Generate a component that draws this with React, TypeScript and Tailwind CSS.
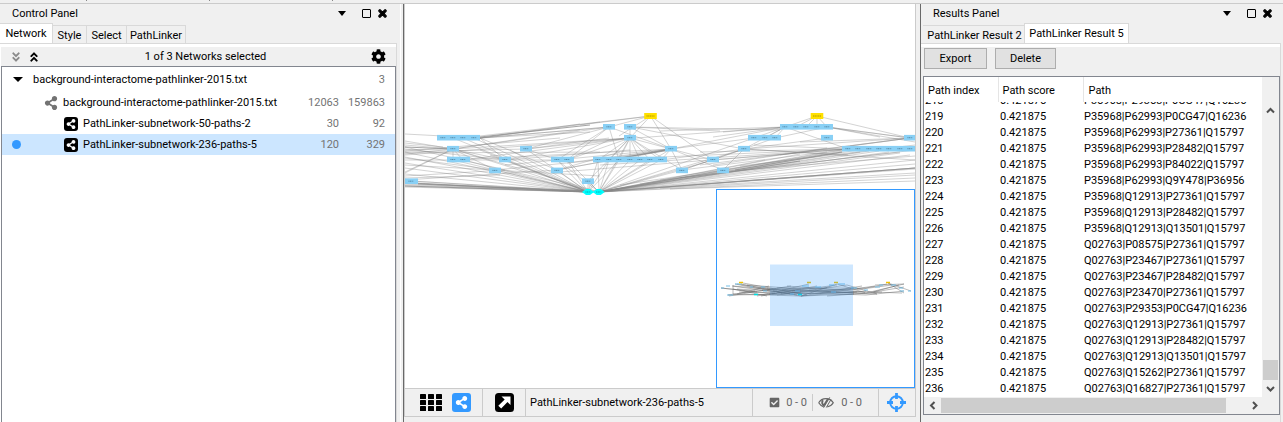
import type { ReactNode } from "react";
import { FaAngleDoubleDown, FaAngleDoubleUp, FaCheckSquare, FaCog, FaShareAlt, FaTimes } from "react-icons/fa";

type Point = [number, number];
type Edge = [number, number, number, number];

// Node boxes: centre y, left, right, label centres
const boxes: { y: number; x1: number; x2: number; labels: number[] }[] = [
  { y: 137.7, x1: 437, x2: 480, labels: [443, 453, 463, 474] },
  { y: 148.7, x1: 447, x2: 459, labels: [453] },
  { y: 159.5, x1: 447, x2: 470, labels: [453, 463] },
  { y: 148.7, x1: 520, x2: 532, labels: [526] },
  { y: 159.5, x1: 499, x2: 511, labels: [505] },
  { y: 170.4, x1: 489, x2: 501, labels: [495] },
  { y: 159.5, x1: 551, x2: 574, labels: [557, 567] },
  { y: 170.4, x1: 551, x2: 563, labels: [557] },
  { y: 181.2, x1: 405, x2: 418, labels: [411] },
  { y: 126.8, x1: 603, x2: 615, labels: [609] },
  { y: 126.8, x1: 624, x2: 636, labels: [630] },
  { y: 137.7, x1: 624, x2: 636, labels: [630] },
  { y: 148.7, x1: 665, x2: 677, labels: [671] },
  { y: 159.5, x1: 593, x2: 667, labels: [598, 609, 619, 630, 640, 650, 661] },
  { y: 159.5, x1: 707, x2: 719, labels: [713] },
  { y: 170.4, x1: 676, x2: 688, labels: [682] },
  { y: 170.4, x1: 717, x2: 729, labels: [723] },
  { y: 181.2, x1: 582, x2: 594, labels: [588] },
  { y: 148.7, x1: 738, x2: 750, labels: [744] },
  { y: 137.7, x1: 748, x2: 781, labels: [754, 765, 775] },
  { y: 126.8, x1: 780, x2: 833, labels: [785, 796, 806, 817, 827] },
  { y: 137.7, x1: 821, x2: 833, labels: [827] },
  { y: 148.7, x1: 842, x2: 916, labels: [848, 858, 869, 879, 889, 900, 910] },
  { y: 137.7, x1: 904, x2: 916, labels: [910] },
];

const fan = ([x, y]: Point, targets: Point[]): Edge[] => targets.map(([a, b]) => [x, y, a, b]);

const edges: Edge[] = [
  ...fan([588, 192], [
    [405, 152], [405, 157], [405, 163], [405, 168], [405, 174], [405, 184], [405, 186], [405, 187],
    [411, 181], [418, 183], [453, 149], [463, 160], [453, 160], [453, 138], [463, 138], [474, 138],
    [495, 170], [505, 160], [526, 149], [557, 170], [557, 160], [567, 160], [588, 181], [480, 150],
    [490, 155], [510, 150], [609, 160], [619, 160], [598, 160],
  ]),
  ...fan([599, 192], [
    [588, 181], [557, 160], [567, 160], [598, 160], [609, 160], [619, 160], [630, 160], [640, 160],
    [650, 160], [661, 160], [630, 138], [671, 149], [682, 170], [723, 170], [713, 160], [744, 149],
    [765, 160], [800, 154], [842, 150], [858, 150], [869, 151], [879, 151], [889, 152], [900, 153],
    [910, 155], [915, 160], [915, 164], [915, 168], [915, 169], [915, 175], [915, 178], [827, 152],
    [848, 150], [754, 138], [453, 149], [463, 160], [411, 181], [405, 185],
  ]),
  ...fan([650.5, 116], [[609, 127], [580, 125], [480, 136], [630, 138], [671, 149], [713, 160], [619, 136]]),
  ...fan([817, 116], [[785, 127], [796, 127], [806, 127], [817, 127], [827, 127], [910, 138]]),
  ...fan([630, 138], [
    [453, 149], [463, 160], [567, 160], [588, 181], [598, 160], [609, 160], [619, 160], [630, 160],
    [640, 160], [650, 160], [661, 160], [671, 149], [682, 170], [526, 149], [505, 160], [630, 127],
  ]),
  ...fan([671, 149], [
    [609, 127], [630, 127], [598, 160], [609, 160], [619, 160], [557, 170], [682, 170], [713, 160],
    [723, 170], [453, 160], [505, 165], [754, 138], [785, 127], [567, 163],
  ]),
  ...fan([453, 149], [[405, 145], [405, 150], [405, 154], [405, 172], [463, 160], [505, 160], [495, 170], [609, 127], [580, 130], [453, 160]]),
  ...fan([785, 127], [[754, 138], [744, 149], [765, 138], [723, 132], [660, 131], [609, 140], [713, 137], [775, 138]]),
  ...fan([827, 127], [[910, 138], [915, 142], [880, 137], [775, 138], [785, 127]]),
  ...fan([480, 138], [[580, 124], [609, 127], [600, 122], [590, 132], [505, 160], [557, 170]]),
  ...fan([744, 149], [[682, 170], [723, 170], [661, 160], [775, 138], [827, 138], [848, 155], [915, 160]]),
  ...fan([848, 149], [[785, 127], [754, 145], [700, 152], [640, 158], [600, 165], [560, 172]]),
  ...fan([910, 138], [[850, 146], [800, 142], [744, 149], [780, 155], [700, 165], [827, 127]]),
  ...fan([609, 127], [[557, 160], [619, 160], [526, 149], [567, 160], [480, 138]]),
  [405, 134, 443, 136], [405, 141, 453, 149], [405, 143, 443, 147], [405, 147, 463, 160],
  [405, 149, 505, 160], [405, 152, 526, 149], [405, 153, 600, 152], [405, 151, 560, 138],
  [405, 155, 630, 138], [405, 160, 557, 160], [405, 158, 495, 170], [405, 165, 600, 176],
  [405, 173, 453, 149], [405, 176, 505, 170], [405, 180, 557, 170], [405, 178, 500, 175],
  [505, 160, 630, 150], [526, 149, 557, 160], [526, 149, 609, 138], [495, 170, 598, 160],
  [557, 170, 671, 149], [557, 170, 620, 152], [567, 160, 609, 140], [682, 170, 744, 149],
  [630, 127, 720, 131], [630, 127, 780, 130], [636, 128, 744, 149], [671, 149, 661, 160],
  [682, 170, 842, 150], [620, 185, 842, 152], [640, 184, 860, 152], [660, 180, 900, 152],
  [680, 178, 915, 150], [720, 172, 915, 156], [740, 166, 915, 145], [660, 188, 915, 173],
  [670, 189, 915, 181], [640, 189, 915, 168], [713, 160, 848, 149], [713, 165, 827, 148],
];

const thickEdges: Edge[] = [
  [411, 183, 588, 192], [405, 186, 588, 192], [418, 184, 588, 191],
  [480, 137, 590, 125], [599, 192, 915, 168], [599, 192, 800, 161],
  [598, 161, 671, 150], [453, 149, 405, 147], [735, 170, 842, 152],
];

const minimapEdges: Edge[] = [
  [4, 98, 40, 102], [4, 98, 60, 104], [18, 94, 65, 103], [26, 93, 90, 105], [16, 95, 16, 104],
  [15, 96, 80, 105], [11, 105, 85, 104], [11, 105, 38, 101], [16, 104, 84, 106], [24, 94, 84, 106],
  [16, 96, 84, 102], [12, 106, 74, 96], [20, 94, 60, 100], [30, 95, 84, 99], [20, 99, 100, 104],
  [40, 106, 92, 94], [84, 106, 120, 94], [84, 106, 137, 104], [84, 106, 149, 101], [84, 106, 145, 96],
  [52, 104, 120, 95], [50, 98, 137, 103], [60, 102, 149, 105], [45, 100, 110, 98], [55, 104, 149, 98],
  [44, 106, 100, 96], [70, 96, 137, 101], [60, 105, 130, 95], [65, 100, 148, 103], [75, 101, 160, 104],
  [120, 94, 149, 103], [130, 95, 160, 104], [149, 103, 187, 94], [137, 100, 175, 95], [158, 95, 187, 94],
  [156, 102, 182, 95], [149, 98, 170, 94], [171, 93, 187, 103], [171, 93, 194, 101], [157, 102, 187, 97],
  [149, 105, 187, 101], [110, 106, 165, 102], [100, 104, 158, 96], [92, 100, 185, 103], [20, 104, 52, 96],
  [22, 102, 58, 103], [16, 99, 50, 106], [60, 98, 137, 98], [56, 101, 137, 99], [64, 104, 140, 102],
];

function NetworkCanvas() {
  return (
    <svg className="block h-full w-full" viewBox="405 4 510 384" preserveAspectRatio="xMaxYMin slice" role="img" aria-label="Network view">
      <g stroke="#858585" strokeWidth="0.6" strokeOpacity="0.6">
        {edges.map(([a, b, c, d], i) => <line key={i} x1={a} y1={b} x2={c} y2={d} />)}
      </g>
      <g stroke="#8a8a8a" strokeWidth="1.2" strokeOpacity="0.75">
        {thickEdges.map(([a, b, c, d], i) => <line key={i} x1={a} y1={b} x2={c} y2={d} />)}
      </g>
      {boxes.map((box, i) => (
        <g key={i}>
          <rect x={box.x1} y={box.y - 2.8} width={box.x2 - box.x1} height="5.6" fill="#89d0f5" />
          {box.labels.map((x) => (
            <path key={x} d={`M${x - 2.5} ${box.y}h5`} stroke="#2c5068" strokeWidth="1" strokeDasharray="1 .6" strokeOpacity="0.6" />
          ))}
        </g>
      ))}
      {[650.5, 817].map((x) => (
        <g key={x}>
          <rect x={x - 6.3} y="113" width="12.6" height="6" fill="#ffe000" />
          <path d={`M${x - 4} 116h8`} stroke="#7a6500" strokeWidth="1" strokeDasharray="1.2 .5" strokeOpacity="0.6" />
        </g>
      ))}
      {[588, 598.7].map((x) => (
        <g key={x}>
          <path d={`M${x - 6} 192l4-3h4l4 3-4 3h-4z`} fill="#00ffff" />
          <path d={`M${x - 2.5} 192h5`} stroke="#067" strokeWidth="1" strokeDasharray="1 .6" strokeOpacity="0.6" />
        </g>
      ))}
    </svg>
  );
}

function Minimap() {
  return (
    <svg className="block h-full w-full" viewBox="0 0 197 197" role="img" aria-label="Network overview">
      <g stroke="#5c5c5c" strokeWidth="0.7" strokeOpacity="0.6">
        {minimapEdges.map(([a, b, c, d], i) => <line key={i} x1={a} y1={b} x2={c} y2={d} />)}
      </g>
      <path
        d="M4 98h3M9 96h4M18 94h7M10 105h6M33 97h3M46 101h4M44 97h4M78 101h5M73 104h4M85 96h7M98 97h6M112 95h5M121 94h7M114 102h5M134 98h6M147 100h4M158 97h5M162 95h4M174 95h5M182 98h4M183 101h4M191 101h3"
        stroke="#75bfe8" strokeWidth="1.2" fill="none"
      />
      <path d="M22 92.500h4M90 92.500h4M117 92.500h4M169 92.500h4" stroke="#f2c200" strokeWidth="1.600" />
      <path d="M37 104.500h4M81 104.500h4" stroke="#00dede" strokeWidth="1.500" />
      <rect x="53" y="74.500" width="83" height="61.500" fill="#3399ff" fillOpacity="0.24" />
    </svg>
  );
}

const ShareSquare = () => (
  <span className="flex size-3.5 shrink-0 items-center justify-center rounded-[3px] bg-black">
    <FaShareAlt className="size-2.5 text-white" />
  </span>
);

function PanelTitle({ children }: { children: ReactNode }) {
  return (
    <div className="flex h-[19px] shrink-0 items-center pl-3">
      <h2 className="grow">{children}</h2>
      <button aria-label="Panel menu" className="mr-4">
        <svg className="block h-[5px] w-2" viewBox="0 0 8 5"><path d="M0 0h8L4 5z" /></svg>
      </button>
      <button aria-label="Float panel" className="mr-1.5 block size-[9px] rounded-[1px] border border-black" />
      <button aria-label="Close panel"><FaTimes className="size-[11px] stroke-black stroke-[50]" /></button>
    </div>
  );
}

const tabIdle = "flex h-[18px] items-center border border-b-0 border-l-0 border-[#d9d9d9] pt-0.5";
const tabActive = "flex h-5 items-center border border-b-0 border-[#d9d9d9] bg-white";

const networks = [
  { name: "background-interactome-pathlinker-2015.txt", nodes: "12063", edges: "159863", depth: 0 },
  { name: "PathLinker-subnetwork-50-paths-2", nodes: "30", edges: "92", depth: 1 },
  { name: "PathLinker-subnetwork-236-paths-5", nodes: "120", edges: "329", depth: 1 },
];

function ControlPanel() {
  return (
    <section className="mr-0.5 flex w-[401px] shrink-0 flex-col border-r border-white pr-px">
      <div className="pr-[11px]"><PanelTitle>Control Panel</PanelTitle></div>
      <div role="tablist" className="flex h-5 shrink-0 items-end">
        <button role="tab" aria-selected="true" className={`${tabActive} w-[53px] justify-center border-l-0`}>Network</button>
        <button role="tab" aria-selected="false" className={`${tabIdle} w-[34px] justify-center`}>Style</button>
        <button role="tab" aria-selected="false" className={`${tabIdle} w-10 justify-center`}>Select</button>
        <button role="tab" aria-selected="false" className={`${tabIdle} w-[59px] justify-center`}>PathLinker</button>
      </div>
      <div className="mr-0.5 flex min-h-0 grow flex-col border-t border-r border-[#d9d9d9] bg-white pt-[3px] pl-px">
        <div className="relative flex h-[19px] shrink-0 items-center bg-[#f0f0f0] pr-2.5 pl-[9px]">
          <button aria-label="Expand all"><FaAngleDoubleDown className="size-3 text-[#8a8a8a]" /></button>
          <button aria-label="Collapse all" className="ml-1.5"><FaAngleDoubleUp className="size-3" /></button>
          <p className="grow text-center">1 of 3 Networks selected</p>
          <button aria-label="Options"><FaCog className="size-[15px]" /></button>
        </div>
        <div className="min-h-0 grow border border-b-0 border-[#82868f]">
          <div className="flex h-[25px] items-center pr-2.5 pl-2.5">
            <button aria-label="Collapse group"><svg className="block h-[5px] w-3" viewBox="0 0 12 5"><path d="M1 0h10L6 5z" /></svg></button>
            <span className="grow pl-[9px] whitespace-nowrap">background-interactome-pathlinker-2015.txt</span>
            <span className="text-[#737373]">3</span>
          </div>
          {networks.map((n, i) => (
            <div key={n.name} className={i === 2 ? "flex h-[21px] items-center bg-[#cce6ff] pr-2.5" : "flex h-[21px] items-center pr-2.5"}>
              <span className="flex w-7 shrink-0 pl-2.5">{i === 2 && <span className="size-[9px] rounded-full bg-[#3399ff]" />}</span>
              <span className={n.depth === 0 ? "flex w-[33px] shrink-0 pl-3.5" : "flex w-[53px] shrink-0 pl-[34px]"}>
                {n.depth === 0 ? <FaShareAlt className="size-3.5 text-[#737373]" /> : <ShareSquare />}
              </span>
              <span className="grow whitespace-nowrap">{n.name}</span>
              <span className="w-10 shrink-0 text-right text-[#737373]">{n.nodes}</span>
              <span className="w-[46px] shrink-0 text-right text-[#737373]">{n.edges}</span>
            </div>
          ))}
        </div>
      </div>
    </section>
  );
}

function StatusBar() {
  return (
    <div className="flex h-[29px] shrink-0 items-center border-y border-[#cbcbcb] text-[#666]">
      <div className="flex h-full w-[78px] items-center gap-2.5 border-r border-[#cbcbcb] pl-[15px]">
        <button aria-label="Show grid">
          <svg className="block h-[17px] w-[22px]" viewBox="0 0 22 17">
            {[0, 6, 12].map((y) => [0, 8, 16].map((x) => <rect key={`${x}-${y}`} x={x} y={y} width="6" height="5" rx="0.6" />))}
          </svg>
        </button>
        <button aria-label="Show view" className="flex size-[19px] items-center justify-center rounded-[3px] bg-[#3399ff]">
          <FaShareAlt className="size-[13px] text-white" />
        </button>
      </div>
      <div className="flex h-full w-[43px] items-center justify-center border-r border-[#cbcbcb]">
        <button aria-label="Detach view" className="size-[19px]">
          <svg className="block size-full" viewBox="0 0 19 19">
            <rect width="19" height="19" rx="3.500" fill="#000" />
            <path d="M6.500 3.500h9V12l-3-3-6.300 6.600L3.300 12.700 9.700 6.500z" fill="#fff" />
          </svg>
        </button>
      </div>
      <p className="grow pl-1 text-black">PathLinker-subnetwork-236-paths-5</p>
      <div className="flex h-full w-[127px] items-center border-x border-[#cbcbcb] pl-4">
        <FaCheckSquare className="size-[11px]" />
        <span className="w-[27px] text-right">0 - 0</span>
        <span className="mx-[5px] h-[17px] w-px bg-[#cbcbcb]" />
        <svg className="h-[11px] w-4" viewBox="0 0 16 11" fill="none" stroke="currentColor">
          <path d="M.7 5.800C2.500 2.700 5 1.600 8 1.600c3 0 5.500 1.300 7.300 4.200-1.500 2.400-3.500 3.700-6 4.100M.7 5.800C2 7.900 3.600 9.200 5.500 9.700" strokeWidth="1.200" />
          <path d="M10 1.800 5.300 9.400M4.800 3.200c-1 2-.6 4 .8 5" strokeWidth="1.800" />
          <path d="M11.700.4 5.600 10.700M13 2.400 8.300 10.500" strokeWidth="1" />
        </svg>
        <span className="w-7 text-right">0 - 0</span>
      </div>
      <div className="flex h-full w-9 items-center justify-center pr-0.5">
        <button aria-label="Fit content" className="size-[19px]">
          <svg className="block size-full" viewBox="0 0 19 19" fill="none" stroke="#3399ff">
            <circle cx="9.500" cy="9.500" r="6.300" strokeWidth="2" />
            <path d="M9.500 0v6M9.500 13v6M0 9.500h6M13 9.500h6" strokeWidth="2.800" />
          </svg>
        </button>
      </div>
    </div>
  );
}

const rows: [number, string][] = [
  [218, "P35968|P29353|P0CG47|Q16236"], [219, "P35968|P62993|P0CG47|Q16236"],
  [220, "P35968|P62993|P27361|Q15797"], [221, "P35968|P62993|P28482|Q15797"],
  [222, "P35968|P62993|P84022|Q15797"], [223, "P35968|P62993|Q9Y478|P36956"],
  [224, "P35968|Q12913|P27361|Q15797"], [225, "P35968|Q12913|P28482|Q15797"],
  [226, "P35968|Q12913|Q13501|Q15797"], [227, "Q02763|P08575|P27361|Q15797"],
  [228, "Q02763|P23467|P27361|Q15797"], [229, "Q02763|P23467|P28482|Q15797"],
  [230, "Q02763|P23470|P27361|Q15797"], [231, "Q02763|P29353|P0CG47|Q16236"],
  [232, "Q02763|Q12913|P27361|Q15797"], [233, "Q02763|Q12913|P28482|Q15797"],
  [234, "Q02763|Q12913|Q13501|Q15797"], [235, "Q02763|Q15262|P27361|Q15797"],
  [236, "Q02763|Q16827|P27361|Q15797"],
];

function Columns() {
  return <colgroup><col className="w-[74px]" /><col className="w-[85px]" /><col /></colgroup>;
}

function Arrow({ d }: { d: string }) {
  return <svg className="size-[9px]" viewBox="0 0 9 9" fill="none" stroke="#505050" strokeWidth="2"><path d={d} /></svg>;
}

function ResultsPanel() {
  const button = "h-[21px] border border-[#adadad] bg-[#e1e1e1] text-center";
  return (
    <section className="flex w-[363px] shrink-0 flex-col border-l border-[#696969] pr-0.5">
      <div className="pr-2"><PanelTitle>Results Panel</PanelTitle></div>
      <div role="tablist" className="flex h-5 shrink-0 items-end pl-0.5">
        <button role="tab" aria-selected="false" className={`${tabIdle} w-[101px] justify-center border-r-0 border-l pl-0.5`}>PathLinker Result 2</button>
        <button role="tab" aria-selected="true" className={`${tabActive} w-[105px] justify-center`}>PathLinker Result 5</button>
      </div>
      <div className="flex min-h-0 grow flex-col border-t border-r border-[#d9d9d9]">
        <div className="h-[3px] shrink-0 bg-white" />
        <div className="flex h-[29px] shrink-0 gap-2 pt-px pl-[3px]">
          <button className={`${button} w-[63px]`}>Export</button>
          <button className={`${button} w-[61px]`}>Delete</button>
        </div>
        <div className="mb-[7px] ml-0.5 flex min-h-0 grow flex-col border border-[#82868f]">
          <div className="flex min-h-0 grow">
            <div className="flex min-w-0 grow flex-col bg-white">
              <table className="w-full shrink-0 table-fixed border-collapse">
                <Columns />
                <thead>
                  <tr className="h-[25px] text-left">
                    <th className="border-r border-[#e5e5e5] pt-[3px] pl-1 font-normal">Path index</th>
                    <th className="border-r border-[#e5e5e5] pt-[3px] pl-1 font-normal">Path score</th>
                    <th className="pt-[3px] pl-[5px] font-normal">Path</th>
                  </tr>
                </thead>
              </table>
              <div className="flex min-h-0 grow flex-col justify-end overflow-hidden pb-px">
                <table className="w-full shrink-0 table-fixed border-collapse leading-[14px]" aria-label="Paths">
                  <Columns />
                  <tbody>
                    {rows.map(([index, path]) => (
                      <tr key={index} className="h-4">
                        <td className="pt-0.5 pl-px">{index}</td>
                        <td className="pt-0.5 pl-0.5">0.421875</td>
                        <td className="pt-0.5 pl-px whitespace-nowrap">{path}</td>
                      </tr>
                    ))}
                  </tbody>
                </table>
              </div>
            </div>
            <div className="flex w-[17px] shrink-0 flex-col items-center pt-[29px] pb-1">
              <Arrow d="M1 6.500 4.500 3 8 6.500" />
              <div className="grow" />
              <div className="mb-1 h-5 w-[15px] bg-[#cdcdcd]" />
              <Arrow d="M1 3 4.500 6.500 8 3" />
            </div>
          </div>
          <div className="flex h-[17px] shrink-0 items-center pr-5 pl-1">
            <Arrow d="M6.500 1 3 4.500 6.500 8" />
            <div className="ml-1 h-[15px] grow bg-[#cdcdcd]" />
            <span className="pl-6"><Arrow d="M3 1l3.500 3.500L3 8" /></span>
          </div>
        </div>
      </div>
    </section>
  );
}

export default function App() {
  return (
    <div className="flex h-screen min-w-[1100px] flex-col overflow-hidden bg-[#f0f0f0] font-['Roboto','Liberation_Sans',sans-serif] text-[11px] leading-4 text-black">
      <div className="flex h-1 shrink-0 items-start border-b border-[#cbcbcb]">
        <span className="ml-[86px] h-px w-px bg-[#888]" />
        <span className="ml-[122px] h-px w-px bg-[#888]" />
        <span className="ml-[122px] h-px w-px bg-[#888]" />
      </div>
      <main className="flex min-h-0 grow">
        <ControlPanel />
        <section className="mr-1 flex min-w-0 grow flex-col border-l border-[#696969] pb-[5px]">
          <div className="flex min-h-0 grow flex-col border-x border-[#cbcbcb]">
            <div className="relative min-h-0 grow overflow-hidden bg-white">
              <NetworkCanvas />
              <div className="absolute right-0 bottom-0 size-[199px] border border-[#3399ff] bg-white">
                <Minimap />
              </div>
            </div>
            <StatusBar />
          </div>
        </section>
        <ResultsPanel />
      </main>
    </div>
  );
}
